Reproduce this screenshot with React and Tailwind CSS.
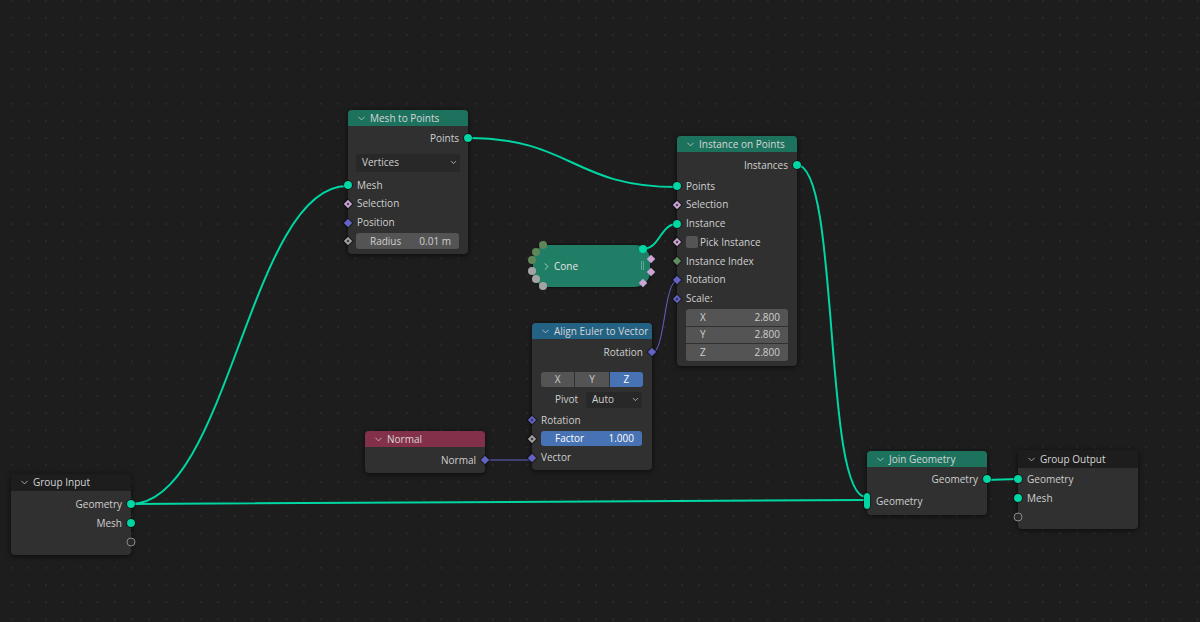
import { ChevronDown, ChevronRight } from 'lucide-react';

const TEAL = '#00d6a3';
const VIOLET = '#6363c7';

// Socket sits on the node edge, so it hangs over the border
function Socket({ side = 'left', kind = 'geo' }) {
  const pos = side === 'left' ? 'left-0 -translate-x-1/2' : 'right-0 translate-x-1/2';
  return (
    <span className={`absolute top-1/2 -translate-y-1/2 ${pos} z-10 flex items-center justify-center`}>
      {kind === 'geo' && <span className="block w-[8px] h-[8px] rounded-full bg-[#00d6a3] outline outline-1 outline-black/40" />}
      {kind === 'empty' && <span className="block w-[9px] h-[9px] rounded-full border border-[#8a8a8a] bg-[#2a2a2a]" />}
      {kind === 'vector' && <span className="block w-[6px] h-[6px] rotate-45 bg-[#6363c7] outline outline-1 outline-black/40" />}
      {kind === 'vectorDot' && (
        <span className="flex items-center justify-center w-[6px] h-[6px] rotate-45 bg-[#6363c7] outline outline-1 outline-black/40">
          <span className="block w-[2px] h-[2px] bg-[#2a2a4a]" />
        </span>
      )}
      {kind === 'bool' && (
        <span className="flex items-center justify-center w-[6px] h-[6px] rotate-45 bg-[#cca6d6] outline outline-1 outline-black/40">
          <span className="block w-[2px] h-[2px] bg-[#3a303d]" />
        </span>
      )}
      {kind === 'boolSolid' && <span className="block w-[6px] h-[6px] rotate-45 bg-[#cca6d6] outline outline-1 outline-black/40" />}
      {kind === 'float' && (
        <span className="flex items-center justify-center w-[6px] h-[6px] rotate-45 bg-[#a1a1a1] outline outline-1 outline-black/40">
          <span className="block w-[2px] h-[2px] bg-[#303030]" />
        </span>
      )}
      {kind === 'int' && <span className="block w-[6px] h-[6px] rotate-45 bg-[#5f8f5f] outline outline-1 outline-black/40" />}
      {kind === 'multi' && <span className="block w-[6px] h-[16px] rounded-[3px] bg-[#00d6a3] outline outline-1 outline-black/40" />}
    </span>
  );
}

function Row({ label, side = 'left', socket, children }) {
  return (
    <div className={`relative h-[18.75px] flex items-center ${side === 'left' ? 'pl-[9px] justify-start' : 'pr-[9px] justify-end'}`}>
      {socket && <Socket side={side} kind={socket} />}
      {label}
      {children}
    </div>
  );
}

function Node({ title, header, position, width = 'w-[120px]', headerHeight = 'h-[16px]', children }) {
  return (
    <div className={`absolute ${position} ${width} rounded-[4px] bg-[#303030] shadow-[0_1px_5px_rgba(0,0,0,0.65)] text-[10px] text-[#cfcfcf]`}>
      <div className={`${headerHeight} ${header} rounded-t-[4px] flex items-center pl-[8px] gap-[3px] text-[#d6d6d6]`}>
        <ChevronDown size={11} strokeWidth={1.6} />
        <span>{title}</span>
      </div>
      {children}
    </div>
  );
}

function Field({ label, value, className = '' }) {
  return (
    <div className={`flex items-center justify-between pl-[14px] pr-[8px] ${className}`}>
      <span>{label}</span>
      <span>{value}</span>
    </div>
  );
}

function Dropdown({ label, className = '' }) {
  return (
    <div className={`flex items-center justify-between pl-[6px] pr-[2px] bg-[#282828] rounded-[3px] ${className}`}>
      <span>{label}</span>
      <ChevronDown size={9} strokeWidth={2} />
    </div>
  );
}

function Wires() {
  return (
    <svg className="absolute inset-0" width="1200" height="622" viewBox="0 0 1200 622" fill="none">
      <g stroke={TEAL} strokeWidth="2" strokeLinecap="round">
        <path d="M131 504 C 228 504 250 186 347 186" />
        <path d="M131 504 L 866 500" />
        <path d="M467 138 C 572 138 572 187 677 187" />
        <path d="M643 249 C 660 249 660 224 677 224" />
        <path d="M797 165 C 840 165 823 497 866 497" />
        <path d="M986 480 L 1018 479" />
      </g>
      <g stroke={VIOLET} strokeWidth="1">
        <path d="M652 353 C 665 353 664 281 677 281" />
        <path d="M485 460 L 532 460" />
      </g>
    </svg>
  );
}

// Collapsed node: sockets fan out around the rounded ends
function ConeNode() {
  return (
    <div className="absolute left-[533px] top-[245px] w-[117px] h-[42px] rounded-[15px] bg-[#207e66] shadow-[0_0_3px_rgba(0,0,0,0.8)] flex items-center pl-[8px] gap-[2px] text-[10px] text-[#e4e4e4]">
      <ChevronRight size={11} strokeWidth={1.6} />
      <span>Cone</span>
      <span className="absolute left-[108px] top-[16px] w-[3px] h-[9px] border-x border-[#5da896]" />
      <span className="absolute left-[6px] top-[-4px] w-[8px] h-[8px] rounded-full bg-[#5f8558]" />
      <span className="absolute left-[-1px] top-[3px] w-[8px] h-[8px] rounded-full bg-[#5f8558]" />
      <span className="absolute left-[-5px] top-[11px] w-[8px] h-[8px] rounded-full bg-[#5f8558]" />
      <span className="absolute left-[-5px] top-[22px] w-[8px] h-[8px] rounded-full bg-[#a3a3a3]" />
      <span className="absolute left-[-1px] top-[30px] w-[8px] h-[8px] rounded-full bg-[#a3a3a3]" />
      <span className="absolute left-[6px] top-[37px] w-[8px] h-[8px] rounded-full bg-[#a3a3a3]" />
      <span className="absolute left-[106px] top-[0px] w-[8px] h-[8px] rounded-full bg-[#00d6a3]" />
      <span className="absolute left-[115px] top-[11px] w-[6px] h-[6px] rotate-45 bg-[#cca6d6]" />
      <span className="absolute left-[115px] top-[24px] w-[6px] h-[6px] rotate-45 bg-[#cca6d6]" />
      <span className="absolute left-[107px] top-[35px] w-[6px] h-[6px] rotate-45 bg-[#cca6d6]" />
    </div>
  );
}

export default function App() {
  return (
    <div
      className="relative w-[1200px] h-[622px] overflow-hidden bg-[#1d1d1d] bg-[radial-gradient(circle,#2a2a2a_1px,transparent_1.3px)] bg-[size:17.2px_17.2px] bg-position-[3px_-8px]"
      style={{ fontFamily: '"Open Sans", "Liberation Sans", sans-serif' }}
    >
      <Wires />

      <Node title="Mesh to Points" header="bg-[#1d725e]" position="left-[348px] top-[110px]">
        <div className="pt-[3px]">
          <Row label="Points" side="right" socket="geo" />
        </div>
        <Dropdown label="Vertices" className="mx-[8px] mt-[6px] h-[18px]" />
        <div className="pt-[4px] pb-[3px]">
          <Row label="Mesh" socket="geo" />
          <Row label="Selection" socket="bool" />
          <Row label="Position" socket="vector" />
          <Row socket="float">
            <Field label="Radius" value="0.01 m" className="w-[103px] -ml-[1px] h-[16px] bg-[#545454] rounded-[3px]" />
          </Row>
        </div>
      </Node>

      <Node title="Instance on Points" header="bg-[#1d725e]" position="left-[677px] top-[136px]">
        <div className="pt-[4px]">
          <Row label="Instances" side="right" socket="geo" />
        </div>
        <div className="pt-[2px]">
          <Row label="Points" socket="geo" />
          <Row label="Selection" socket="bool" />
          <Row label="Instance" socket="geo" />
          <Row socket="bool">
            <span className="w-[12px] h-[12px] rounded-[2px] bg-[#545454] mr-[2px]" />
            <span>Pick Instance</span>
          </Row>
          <Row label="Instance Index" socket="int" />
          <Row label="Rotation" socket="vector" />
          <Row label="Scale:" socket="vectorDot" />
        </div>
        <div className="mx-[9px] mt-[1px] mb-[5px] rounded-[3px] overflow-hidden flex flex-col gap-px">
          <Field label="X" value="2.800" className="h-[16.5px] bg-[#545454]" />
          <Field label="Y" value="2.800" className="h-[16.5px] bg-[#545454]" />
          <Field label="Z" value="2.800" className="h-[16.5px] bg-[#545454]" />
        </div>
      </Node>

      <ConeNode />

      <Node title="Align Euler to Vector" header="bg-[#246283]" position="left-[532px] top-[323px]">
        <div className="pt-[4px]">
          <Row label="Rotation" side="right" socket="vector" />
        </div>
        <div className="mx-[9px] mt-[10px] h-[15px] flex gap-px rounded-[3px] overflow-hidden text-center leading-[15px]">
          <span className="flex-1 bg-[#545454]">X</span>
          <span className="flex-1 bg-[#545454]">Y</span>
          <span className="flex-1 bg-[#4772b3] text-white">Z</span>
        </div>
        <div className="flex items-center justify-end gap-[8px] mt-[5px] pr-[10px] h-[16px]">
          <span>Pivot</span>
          <Dropdown label="Auto" className="w-[56px] h-[16px]" />
        </div>
        <div className="pt-[3px] pb-[3px]">
          <Row label="Rotation" socket="vectorDot" />
          <Row socket="float">
            <Field label="Factor" value="1.000" className="w-[101px] h-[15px] bg-[#4772b3] rounded-[3px] text-white" />
          </Row>
          <Row label="Vector" socket="vector" />
        </div>
      </Node>

      <Node title="Normal" header="bg-[#83314a]" position="left-[365px] top-[431px]">
        <div className="pt-[4px] pb-[3px]">
          <Row label="Normal" side="right" socket="vector" />
        </div>
      </Node>

      <Node title="Group Input" header="bg-[#1d1d1d]" headerHeight="h-[17px]" position="left-[11px] top-[474px]">
        <div className="pt-[4px] pb-[4px]">
          <Row label="Geometry" side="right" socket="geo" />
          <Row label="Mesh" side="right" socket="geo" />
          <Row side="right" socket="empty" />
        </div>
      </Node>

      <Node title="Join Geometry" header="bg-[#1d725e]" position="left-[867px] top-[451px]">
        <div className="pt-[3px]">
          <Row label="Geometry" side="right" socket="geo" />
        </div>
        <div className="pt-[3px] pb-[4px]">
          <Row label="Geometry" socket="multi" />
        </div>
      </Node>

      <Node title="Group Output" header="bg-[#1d1d1d]" headerHeight="h-[18px]" position="left-[1018px] top-[450px]">
        <div className="pb-[3px] pt-[2px]">
          <Row label="Geometry" socket="geo" />
          <Row label="Mesh" socket="geo" />
          <Row socket="empty" />
        </div>
      </Node>
    </div>
  );
}
